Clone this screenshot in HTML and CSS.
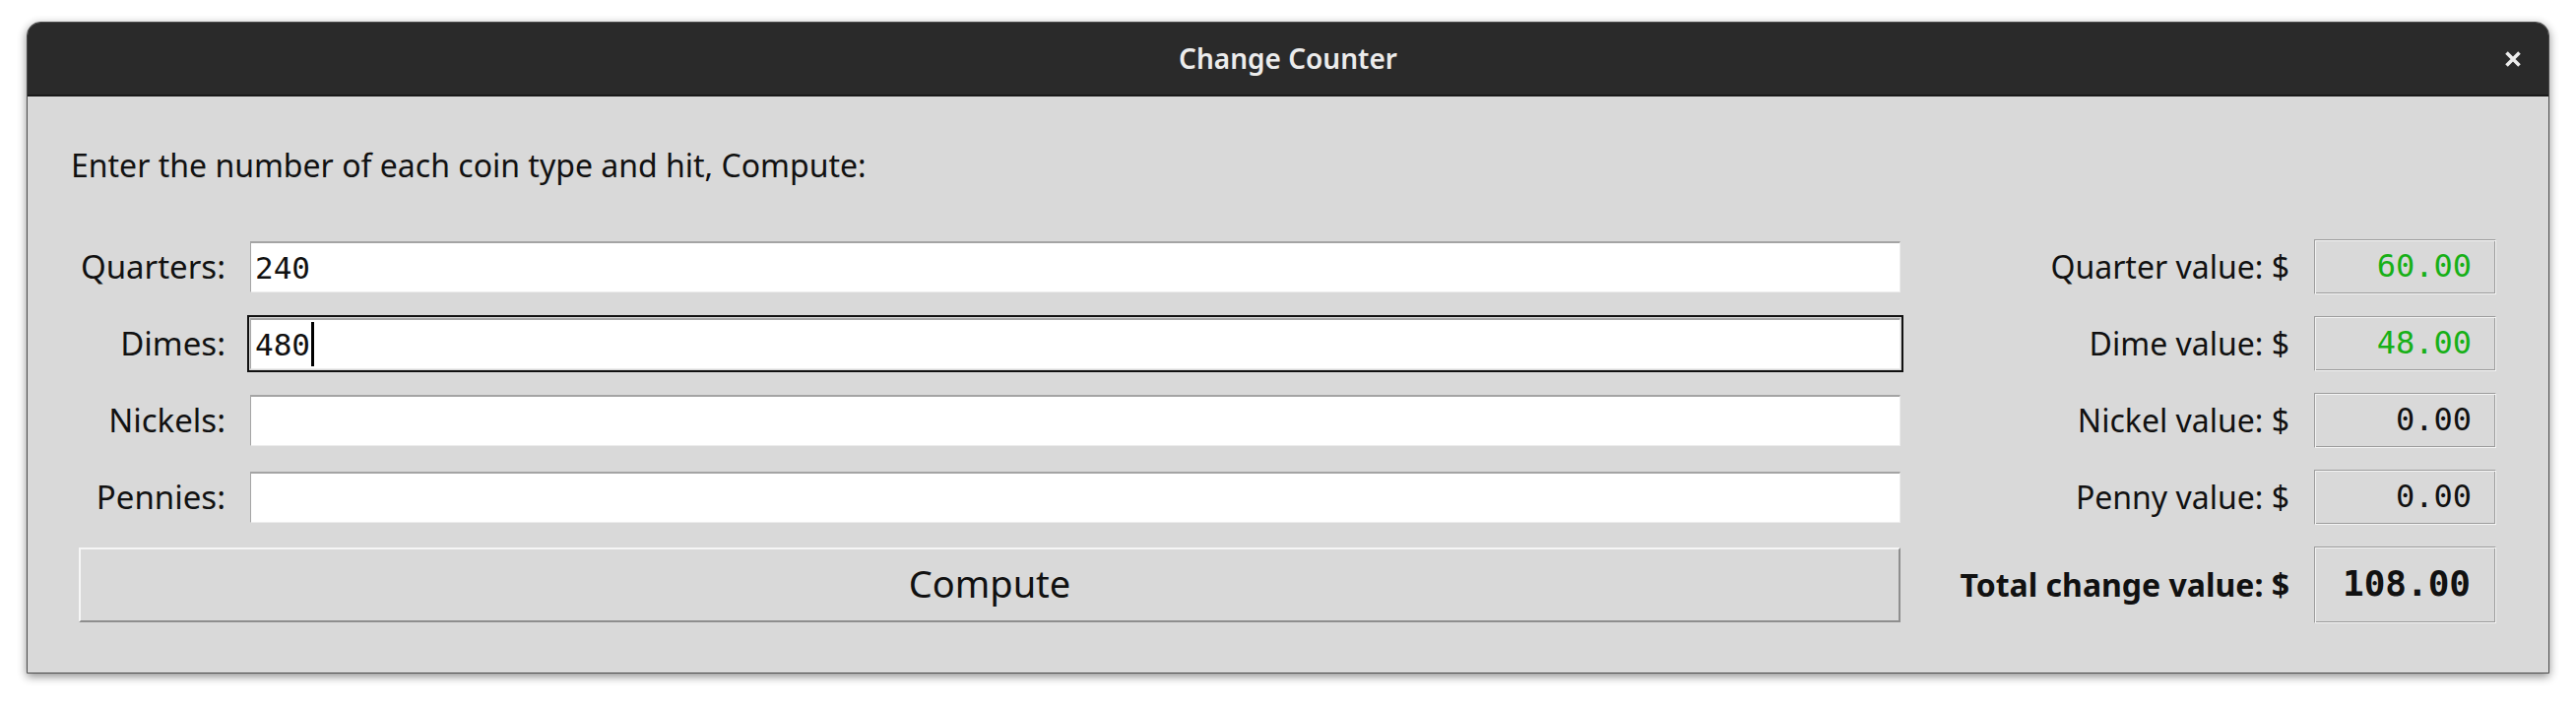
FILE: index.html
```html
<!DOCTYPE html>
<html>
<head>
<meta charset="utf-8">
<title>Change Counter</title>
<link rel="stylesheet" href="styles.css">
</head>
<body>
<div class="window">
  <div class="titlebar">
    <span></span>
    <span class="title">Change Counter</span>
    <svg class="close" width="18" height="16" viewBox="0 0 18 16"><path d="M2.5 1.5 L15.5 14.5 M15.5 1.5 L2.5 14.5" stroke="#ececec" stroke-width="3.6" stroke-linecap="butt"/></svg>
  </div>
  <div class="content">
    <p class="prompt">Enter the number of each coin type and hit, Compute:</p>
    <div class="form">
      <span class="lbl">Quarters:</span>
      <div class="entry">240</div>
      <span class="rlbl">Quarter value: $</span>
      <div class="value green">60.00</div>

      <span class="lbl">Dimes:</span>
      <div class="entry focused">480<span class="caret"></span></div>
      <span class="rlbl">Dime value: $</span>
      <div class="value green">48.00</div>

      <span class="lbl">Nickels:</span>
      <div class="entry"></div>
      <span class="rlbl">Nickel value: $</span>
      <div class="value">0.00</div>

      <span class="lbl">Pennies:</span>
      <div class="entry"></div>
      <span class="rlbl">Penny value: $</span>
      <div class="value">0.00</div>

      <button class="compute">Compute</button>
      <span class="rlbl total-lbl">Total change value: $</span>
      <div class="value total">108.00</div>
    </div>
  </div>
</div>
</body>
</html>
```

FILE: styles.css
```css
html, body {
  margin: 0;
  padding: 0;
  background: #ffffff;
}

body {
  width: 2616px;
  height: 718px;
  overflow: hidden;
  font-family: "Noto Sans", "Open Sans", sans-serif;
}

.window {
  margin: 22px 0 0 27px;
  width: 2562px;
  height: 662px;
  box-sizing: border-box;
  border: 1px solid #4c4c4c;
  border-radius: 14px 14px 0 0;
  background: #d9d9d9;
  box-shadow: 0 3px 10px rgba(0, 0, 0, 0.45);
  overflow: hidden;
}

.titlebar {
  height: 75px;
  box-sizing: border-box;
  background: #2a2a2a;
  border-bottom: 2px solid #1a1a1a;
  display: grid;
  grid-template-columns: 1fr auto 1fr;
  align-items: center;
  padding: 0 27px;
}

.title {
  color: #ececec;
  font-size: 28px;
  font-weight: 600;
  line-height: 40px;
  padding-bottom: 2px;
}

.close {
  justify-self: end;
  display: block;
}

.content {
  padding: 50px 0 0 52px;
}

.prompt {
  margin: 0 0 55px -8px;
  font-size: 32px;
  line-height: 40px;
  color: #111;
}

.form {
  display: grid;
  grid-template-columns: 149px 1676px 370px 185px;
  grid-template-rows: 56px 56px 56px 56px 78px;
  column-gap: 25px;
  row-gap: 22px;
  align-items: center;
}

.lbl, .rlbl {
  font-size: 32px;
  line-height: 40px;
  color: #111;
  text-align: right;
  white-space: nowrap;
}

.lbl {
  font-size: 33px;
}

.entry {
  height: 52px;
  box-sizing: border-box;
  background: #ffffff;
  border-top: 2px solid #a4a4a4;
  border-left: 1px solid #a4a4a4;
  border-bottom: 1px solid #ececec;
  border-right: 1px solid #ececec;
  font-family: "DejaVu Sans Mono", monospace;
  font-size: 31px;
  line-height: 48px;
  padding-left: 4px;
  color: #111;
  display: flex;
  align-items: center;
}

.entry.focused {
  outline: 2px solid #111;
  outline-offset: 1px;
}

.caret {
  display: inline-block;
  width: 3px;
  height: 45px;
  background: #000;
  margin-left: 1px;
}

.value {
  height: 56px;
  box-sizing: border-box;
  border-top: 1px solid #9c9c9c;
  border-left: 1px solid #9c9c9c;
  border-bottom: 1px solid #f4f4f4;
  border-right: 1px solid #f4f4f4;
  box-shadow: inset 1px 1px 0 #f4f4f4, inset -1px -1px 0 #9c9c9c;
  font-family: "DejaVu Sans Mono", monospace;
  font-size: 32px;
  line-height: 52px;
  text-align: right;
  padding-right: 24px;
  color: #111;
}

.value.green {
  color: #17b017;
}

.value.total {
  height: 78px;
  line-height: 74px;
  font-weight: bold;
  font-size: 36px;
  padding-right: 25px;
}

.total-lbl {
  font-weight: bold;
}

.compute {
  grid-column: 1 / 3;
  height: 76px;
  margin: 0;
  box-sizing: border-box;
  background: #d9d9d9;
  border-top: 2px solid #f6f6f6;
  border-left: 2px solid #f6f6f6;
  border-bottom: 2px solid #8e8e8e;
  border-right: 2px solid #8e8e8e;
  font-family: "Noto Sans", "Open Sans", sans-serif;
  font-size: 38px;
  color: #111;
  padding: 0 0 4px 0;
}
```
